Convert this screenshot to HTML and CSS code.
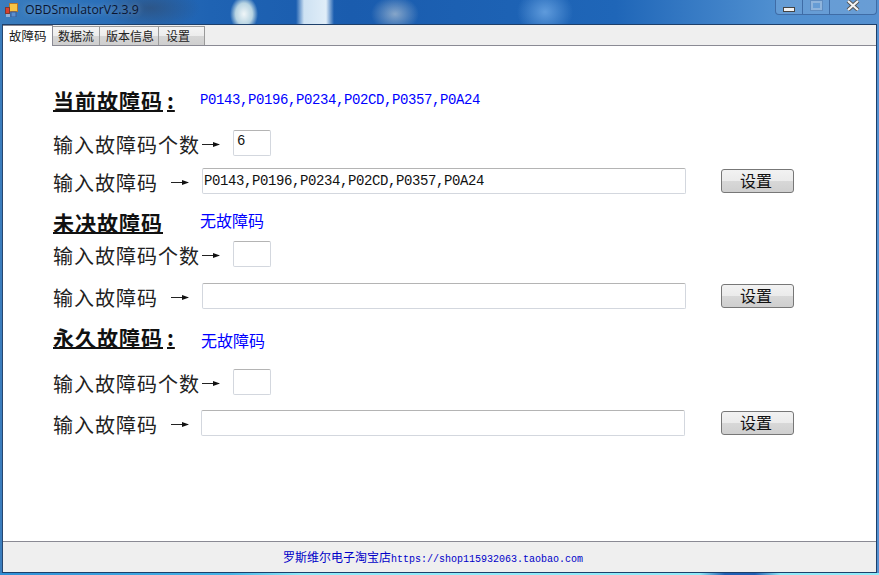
FILE: index.html
```html
<!DOCTYPE html>
<html lang="zh-CN">
<head>
<meta charset="UTF-8" />
<title>OBDSmulatorV2.3.9</title>
<link rel="stylesheet" href="styles.css">
</head>
<body>
<div class="window">
  <div class="titlebar">
    <svg class="app-icon" width="13" height="14" viewBox="0 0 13 14">
      <rect x="4.5" y="0.5" width="8" height="8" fill="#f6c445" stroke="#b5762a"/>
      <rect x="0.5" y="4.5" width="4" height="6" fill="#d8402e" stroke="#7d3a30"/>
      <rect x="6" y="9" width="5" height="5" fill="#5b8fd0" stroke="#3c5c94"/>
      <rect x="1" y="11" width="4" height="3" fill="#8fb0d8"/>
    </svg>
    <span class="title">OBDSmulatorV2.3.9</span>
    <div class="controls">
      <div class="ctl ctl-min"><span class="min-glyph"></span></div>
      <div class="ctl ctl-max"><span class="max-glyph"></span></div>
      <div class="ctl ctl-close">
        <svg width="14" height="11" viewBox="0 0 14 11"><path d="M2 1 L12 10 M12 1 L2 10" stroke="#555" stroke-width="4"/><path d="M2 1 L12 10 M12 1 L2 10" stroke="#f4f4f4" stroke-width="2.2"/></svg>
      </div>
    </div>
  </div>

  <div class="client">
    <div class="tabs">
      <div class="tab active">故障码</div>
      <div class="tab tab-data">数据流</div>
      <div class="tab tab-ver">版本信息</div>
      <div class="tab tab-set">设置</div>
    </div>

    <div class="page">
      <div class="row sec-first">
        <h2 class="heading">当前故障码<span class="colon">:</span></h2>
        <span class="codes">P0143,P0196,P0234,P02CD,P0357,P0A24</span>
      </div>
      <div class="row count-row r-a">
        <span class="label">输入故障码个数</span>
        <svg class="arrow" width="18" height="7" viewBox="0 0 18 7"><path d="M0 3.5 H17" stroke="#222" stroke-width="1"/><path d="M11 1 L18 3.5 L11 6 Z" fill="#111"/></svg>
        <input class="num" type="text" value="6">
      </div>
      <div class="row code-row r-b">
        <span class="label">输入故障码</span>
        <svg class="arrow" width="18" height="7" viewBox="0 0 18 7"><path d="M0 3.5 H17" stroke="#222" stroke-width="1"/><path d="M11 1 L18 3.5 L11 6 Z" fill="#111"/></svg>
        <input class="long" type="text" value="P0143,P0196,P0234,P02CD,P0357,P0A24">
        <button class="btn">设置</button>
      </div>
      <div class="row sec-second">
        <h2 class="heading">未决故障码</h2>
        <span class="none">无故障码</span>
      </div>
      <div class="row count-row r-c">
        <span class="label">输入故障码个数</span>
        <svg class="arrow" width="18" height="7" viewBox="0 0 18 7"><path d="M0 3.5 H17" stroke="#222" stroke-width="1"/><path d="M11 1 L18 3.5 L11 6 Z" fill="#111"/></svg>
        <input class="num" type="text">
      </div>
      <div class="row code-row r-d">
        <span class="label">输入故障码</span>
        <svg class="arrow" width="18" height="7" viewBox="0 0 18 7"><path d="M0 3.5 H17" stroke="#222" stroke-width="1"/><path d="M11 1 L18 3.5 L11 6 Z" fill="#111"/></svg>
        <input class="long" type="text">
        <button class="btn">设置</button>
      </div>
      <div class="row sec-third">
        <h2 class="heading">永久故障码<span class="colon">:</span></h2>
        <span class="none">无故障码</span>
      </div>
      <div class="row count-row r-e">
        <span class="label">输入故障码个数</span>
        <svg class="arrow" width="18" height="7" viewBox="0 0 18 7"><path d="M0 3.5 H17" stroke="#222" stroke-width="1"/><path d="M11 1 L18 3.5 L11 6 Z" fill="#111"/></svg>
        <input class="num" type="text">
      </div>
      <div class="row code-row r-f">
        <span class="label">输入故障码</span>
        <svg class="arrow" width="18" height="7" viewBox="0 0 18 7"><path d="M0 3.5 H17" stroke="#222" stroke-width="1"/><path d="M11 1 L18 3.5 L11 6 Z" fill="#111"/></svg>
        <input class="long" type="text">
        <button class="btn">设置</button>
      </div>
    </div>

    <div class="statusbar"><span class="shop">罗斯维尔电子淘宝店</span>https://shop115932063.taobao.com</div>
  </div>
</div>
</body>
</html>
```

FILE: styles.css
```css
* {
  margin: 0; padding: 0; box-sizing: border-box;
}
html, body {
  height: 100%;
  overflow: hidden;
}
body {
  font-family: "Noto Sans CJK SC", sans-serif;
  color: #111;
}
.window {
  width: 879px;
  height: 575px;
  display: flex;
  flex-direction: column;
  padding: 0 2px 2px 2px;
  background:
    linear-gradient(90deg, #2f8fd6 0, #45b4e6 230px, #8feaf8 300px, #8feaf8 700px, #1f5fb4 725px, #1f5fb4 755px, #8feaf8 780px, #8feaf8 100%) left bottom / 100% 2px no-repeat,
    radial-gradient(ellipse 14px 18px at 244px 14px, #f0f6f8 0, #b8d4e2 60%, rgba(40,110,180,0) 100%),
    linear-gradient(90deg, rgba(255,255,255,0) 296px, rgba(225,240,250,0.9) 304px, rgba(235,245,252,0.95) 326px, rgba(255,255,255,0) 334px),
    radial-gradient(ellipse 24px 18px at 395px 14px, rgba(170,190,210,0.75) 0, rgba(60,120,190,0) 100%),
    radial-gradient(ellipse 28px 24px at 545px 12px, #5f9bdc 0, rgba(60,120,190,0) 100%),
    radial-gradient(ellipse 50px 22px at 150px 8px, rgba(50,70,100,0.55) 0, rgba(50,70,100,0) 100%),
    linear-gradient(90deg, #3b7dbd 0, #2f74bb 60px, #1f63b3 210px, #1a5cae 40%, #1f66b8 70%, #4f8fd0 88%, #5590d0 100%);
}
.titlebar {
  height: 24px;
  flex: none;
  display: flex;
  align-items: flex-start;
  padding: 1px 0 0 3px;
}
.app-icon {
  margin-top: 2px;
}
.title {
  margin-left: 7px;
  font: 12.3px/17px "Open Sans", sans-serif;
  color: #0a1530;
  text-shadow: 0 0 6px rgba(255,255,255,0.45);
}
.controls {
  margin: -1px 0 0 auto;
  display: flex;
  height: 15px;
  border: 1px solid #3f6ca6;
  border-top: 0;
  border-radius: 0 0 4px 4px;
  background: rgba(255,255,255,0.12);
}
.ctl {
  display: flex;
  align-items: center;
  justify-content: center;
  height: 14px;
}
.ctl-min { width: 27px; border-right: 1px solid #3f6ca6; }
.ctl-max { width: 27px; border-right: 1px solid #3f6ca6; }
.ctl-close { width: 46px; }
.ctl-close svg { margin-top: -4px; }
.min-glyph {
  width: 12px; height: 5px;
  margin-top: 4px;
  background: #f2f2f2;
  border: 1px solid #444;
}
.max-glyph {
  width: 11px; height: 9px;
  margin-top: -4px;
  border: 2px solid #8fb4dc;
  outline: 1px solid #5f8cc0;
}
.client {
  flex: 1;
  display: flex;
  flex-direction: column;
  border: 1px solid #1d3f6a;
  border-left-color: #27466e;
  background: #fff;
  min-height: 0;
}
.tabs {
  height: 21px;
  flex: none;
  display: flex;
  align-items: flex-end;
  background: #efefef;
  border-bottom: 1px solid #8a8a94;
  font-size: 12px;
}
.tab {
  height: 19px;
  line-height: 18px;
  color: #222;
  border: 1px solid #9a9a9a;
  border-bottom: 0;
  border-left: 0;
  background: linear-gradient(#f4f4f4 0, #ececec 50%, #d6d6d6 51%, #cfcfcf 100%);
}
.tab.active {
  width: 50px;
  height: 21px;
  margin-bottom: -1px;
  padding-left: 6px;
  background: #fff;
  border-color: #8a8a94;
  position: relative;
  line-height: 20px;
  font-size: 12.5px;
}
.tab-data { width: 47px; padding-left: 5px; }
.tab-ver { width: 59px; padding-left: 6px; }
.tab-set { width: 46px; padding-left: 7px; }

.page {
  flex: 1;
  min-height: 0;
  background: #fff;
  padding-left: 50px;
}
.row {
  display: flex;
  align-items: center;
}
.heading {
  font-size: 21px;
  line-height: 24px;
  font-weight: 700;
  letter-spacing: 1px;
  color: #111;
  text-decoration: underline;
  text-underline-offset: 1px;
  white-space: nowrap;
}
.colon {
  margin-left: 4px;
}
.sec-first { margin-top: 42px; height: 26px; }
.sec-first .heading { width: 147px; margin-top: -2px; }
.codes {
  font: 14px/18px "Liberation Mono", monospace;
  color: #0000ff;
  letter-spacing: -0.4px;
  margin-top: -2px;
}
.label {
  font-size: 20px;
  line-height: 26px;
  letter-spacing: 1px;
  padding-top: 4px;
  color: #222;
  white-space: nowrap;
}
.arrow {
  flex: none;
  margin-top: 2px;
}
.count-row .label { width: 149px; }
.count-row .arrow { margin-right: 13px; }
.code-row .label { width: 118px; }
.code-row .arrow { margin-right: 13px; }
.num, .long {
  height: 26px;
  border: 1px solid #d3d7de;
  border-top-color: #b4b4b4;
  border-radius: 2px;
  background: #fff;
  outline: none;
  font: 14px/18px "Liberation Mono", monospace;
  color: #111;
  letter-spacing: -0.4px;
}
.num { width: 38px; padding: 0 0 4px 3px; }
.long { width: 484px; padding: 0 0 0 1px; }
.btn {
  width: 73px;
  height: 24px;
  margin-left: 35px;
  padding: 0 3px 2px 0;
  border: 1px solid #777;
  border-radius: 3px;
  background: linear-gradient(#f2f2f2 0, #ebebeb 48%, #d8d8d8 50%, #cfcfcf 100%);
  font-family: "Noto Sans CJK SC", sans-serif;
  font-size: 16px;
  line-height: 20px;
  color: #111;
}
.r-a { margin-top: 16px; height: 26px; }
.r-b { margin-top: 12px; height: 26px; }
.sec-second { margin-top: 17px; height: 26px; }
.sec-second .heading { width: 147px; margin-top: -4px; }
.none {
  font-size: 16px;
  line-height: 22px;
  color: #0000ff;
  margin-top: -8px;
}
.r-c { margin-top: 4px; height: 26px; }
.r-d { margin-top: 16px; height: 26px; }
.sec-third { margin-top: 16px; height: 26px; }
.sec-third .heading { width: 148px; margin-top: -2px; }
.sec-third .none { margin-top: 3px; }
.r-e { margin-top: 18px; height: 26px; }
.r-f { margin-top: 15px; height: 26px; }
.r-f .long { margin-left: -1px; }
.r-f .btn { margin-left: 36px; }

.statusbar {
  height: 31px;
  flex: none;
  background: #efefef;
  border-top: 1px solid #8a8a94;
  text-align: center;
  padding: 7px 13px 0 0;
  font: 10px/16px "Liberation Mono", monospace;
  color: #0000c8;
}
.shop {
  font-family: "Noto Sans CJK SC", sans-serif;
  font-size: 12px;
}
```
